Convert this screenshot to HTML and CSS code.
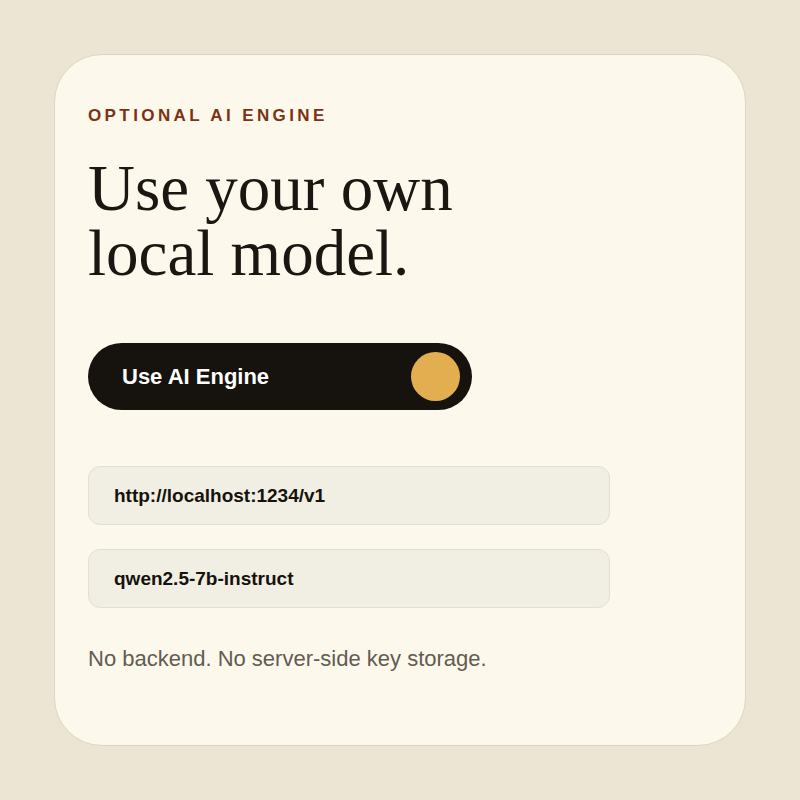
FILE: index.html
```html
<!DOCTYPE html>
<html lang="en">
<head>
  <meta charset="UTF-8" />
  <meta name="viewport" content="width=device-width, initial-scale=1.0"/>
  <title>AI Engine</title>
  <link rel="stylesheet" href="styles.css">
</head>
<body>

  <div class="card">
    <div class="eyebrow">OPTIONAL AI ENGINE</div>
    <h1 class="title">Use your own<br>local model.</h1>

    <button class="toggle" onclick="this.classList.toggle('off')">
      <span>Use AI Engine</span>
      <span class="knob"></span>
    </button>

    <div class="fields">
      <input class="field" type="text" value="http://localhost:1234/v1">
      <input class="field" type="text" value="qwen2.5-7b-instruct">
    </div>

    <p class="note">No backend. No server-side key storage.</p>
  </div>

</body>
</html>
```

FILE: styles.css
```css
body {
  background-color: #ede5d4;
  font-family: "Liberation Sans", Arial, sans-serif;
  margin: 0;
  height: 100vh;
  display: flex;
  justify-content: center;
  align-items: center;
}

.card {
  box-sizing: border-box;
  width: 692px;
  height: 692px;
  background-color: #fdf8ec;
  border: 1.5px solid #ddd4c2;
  border-radius: 48px;
  padding: 51px 33px;
}

.eyebrow {
  color: #7a3312;
  font-size: 17px;
  font-weight: bold;
  letter-spacing: 0.2em;
  line-height: 20px;
}

.title {
  font-family: "Liberation Serif", "Times New Roman", serif;
  font-weight: normal;
  font-size: 65px;
  line-height: 65px;
  color: #1a1612;
  margin: 30px 0 0;
}

.toggle {
  margin-top: 57px;
  width: 384px;
  height: 67px;
  border: none;
  border-radius: 34px;
  background-color: #16120d;
  color: #fff;
  font-family: inherit;
  font-size: 22px;
  font-weight: bold;
  display: flex;
  align-items: center;
  justify-content: space-between;
  padding: 0 12px 0 34px;
  cursor: pointer;
}

.knob {
  width: 49px;
  height: 49px;
  border-radius: 50%;
  background-color: #e2ae50;
}

.toggle.off .knob {
  background-color: #6b655c;
}

.fields {
  margin-top: 56px;
  display: flex;
  flex-direction: column;
  gap: 24px;
}

.field {
  box-sizing: border-box;
  width: 522px;
  height: 59px;
  background-color: #f1eee3;
  border: 1px solid #e5dfcf;
  border-radius: 12px;
  padding: 0 25px;
  font-family: inherit;
  font-size: 19px;
  font-weight: bold;
  color: #16120d;
  outline: none;
}

.note {
  margin: 38px 0 0;
  font-size: 22px;
  color: #625c52;
}
```
